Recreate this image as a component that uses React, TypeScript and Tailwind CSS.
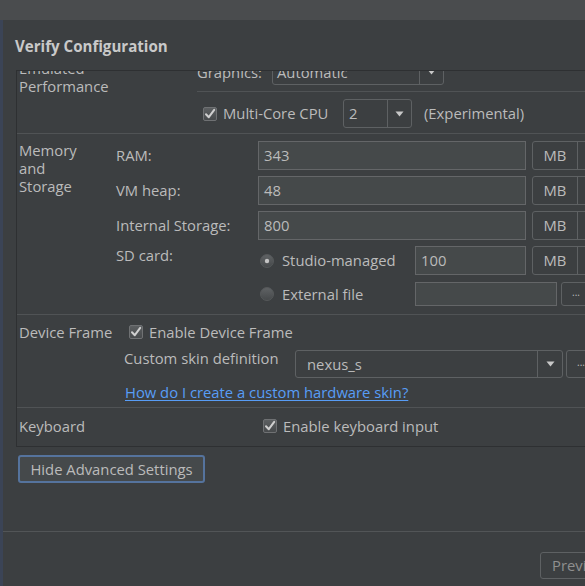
import React from "react";

function Check() {
  return (
    <svg width="14" height="14" viewBox="0 0 14 14" className="shrink-0">
      <defs>
        <linearGradient id="cbg" x1="0" y1="0" x2="0" y2="1">
          <stop offset="0" stopColor="#5d6062" />
          <stop offset="1" stopColor="#46494b" />
        </linearGradient>
      </defs>
      <rect x="0.5" y="0.5" width="13" height="13" rx="1.5" fill="url(#cbg)" stroke="#6f7173" />
      <path d="M3 7.2 L5.8 10.2 L11.2 2.8" fill="none" stroke="#cfcfcf" strokeWidth="2" strokeLinecap="round" strokeLinejoin="round" />
    </svg>
  );
}

function Radio({ on }: { on?: boolean }) {
  return (
    <svg width="14" height="14" viewBox="0 0 14 14" className="shrink-0">
      <defs>
        <linearGradient id="rbg" x1="0" y1="0" x2="0" y2="1">
          <stop offset="0" stopColor="#606365" />
          <stop offset="1" stopColor="#45484a" />
        </linearGradient>
      </defs>
      <circle cx="7" cy="7" r="6.5" fill="url(#rbg)" stroke="#55585a" />
      {on && <circle cx="7" cy="7" r="2.2" fill="#c4c4c4" />}
    </svg>
  );
}

function Arrow() {
  return (
    <svg width="9" height="6" viewBox="0 0 9 6">
      <path d="M0.5 0.5 L8.5 0.5 L4.5 5.5 Z" fill="#c8c8c8" />
    </svg>
  );
}

export default function App() {
  return (
    <div className="w-[585px] h-[586px] overflow-hidden bg-[#3c3f41] flex flex-col text-[#bbbbbb] text-[14.8px] font-['Open_Sans',sans-serif]">
      <div className="h-[20px] shrink-0 bg-[#4a4c4e]" />
      <div className="flex flex-1 min-h-0">
        <div className="w-[3px] shrink-0 bg-[#3b4456]" />
        <div className="flex flex-col flex-1 min-w-0">
          <div className="mt-[16px] ml-[12px] h-[20px] leading-[20px] font-bold text-[15.1px] text-[#c9c9c9]">
            Verify Configuration
          </div>
          <div className="mt-[14px] ml-[13px] w-[600px] shrink-0 border-t border-l border-b border-[#2e3032] overflow-hidden flex flex-col">
            {/* Emulated Performance */}
            <div className="-mt-[12px] flex border-b border-[#505355] pb-[5px]">
              <div className="w-[180px] shrink-0 pl-[2px] leading-[18px]">
                <div>Emulated</div>
                <div>Performance</div>
              </div>
              <div className="flex flex-col flex-1">
                <div className="h-[26px] flex items-center">
                  <div className="w-[75px] shrink-0">Graphics:</div>
                  <div className="w-[172px] h-[26px] border border-[#5e6163] rounded-[3px] flex items-center">
                    <div className="flex-1 pl-[4px]">Automatic</div>
                    <div className="w-[24px] h-full border-l border-[#5e6163] flex items-center justify-center">
                      <Arrow />
                    </div>
                  </div>
                </div>
                <div className="mt-[6px] h-px bg-[#505355]" />
                <div className="mt-[7px] h-[29px] flex items-center">
                  <div className="w-[146px] shrink-0 flex items-center">
                    <div className="ml-[6px]"><Check /></div>
                    <div className="ml-[6px]">Multi-Core CPU</div>
                  </div>
                  <div className="w-[69px] h-[29px] border border-[#5e6163] rounded-[3px] flex items-center">
                    <div className="flex-1 pl-[5px]">2</div>
                    <div className="w-[24px] h-full border-l border-[#5e6163] flex items-center justify-center">
                      <Arrow />
                    </div>
                  </div>
                  <div className="ml-[12px]">(Experimental)</div>
                </div>
              </div>
            </div>

            {/* Memory and Storage */}
            <div className="flex border-b border-[#505355] pt-[7px] pb-[8px]">
              <div className="w-[99px] shrink-0 pl-[2px] leading-[18px]">
                <div>Memory</div>
                <div>and</div>
                <div>Storage</div>
              </div>
              <div className="flex flex-col gap-[6px]">
                {[
                  ["RAM:", "343"],
                  ["VM heap:", "48"],
                  ["Internal Storage:", "800"],
                ].map(([l, v]) => (
                  <div key={l} className="h-[29px] flex items-center">
                    <div className="w-[142px] shrink-0">{l}</div>
                    <div className="w-[268px] h-[29px] bg-[#45494a] border border-[#646668] flex items-center pl-[5px]">{v}</div>
                    <div className="ml-[6px] w-[70px] h-[29px] border border-[#5e6163] rounded-[3px] flex items-center">
                      <div className="w-[44px] text-center">MB</div>
                      <div className="flex-1 h-full border-l border-[#5e6163]" />
                    </div>
                  </div>
                ))}
                <div className="h-[29px] flex items-start">
                  <div className="w-[142px] shrink-0 leading-[18px]">SD card:</div>
                  <div className="w-[157px] shrink-0 h-[29px] flex items-center">
                    <div className="ml-[2px]"><Radio on /></div>
                    <div className="ml-[8px]">Studio-managed</div>
                  </div>
                  <div className="w-[111px] h-[29px] bg-[#45494a] border border-[#646668] flex items-center pl-[5px]">100</div>
                  <div className="ml-[6px] w-[70px] h-[29px] border border-[#5e6163] rounded-[3px] flex items-center">
                    <div className="w-[44px] text-center">MB</div>
                    <div className="flex-1 h-full border-l border-[#5e6163]" />
                  </div>
                </div>
                <div className="mt-px h-[24px] flex items-center">
                  <div className="w-[142px] shrink-0" />
                  <div className="w-[157px] shrink-0 flex items-center">
                    <div className="ml-[2px]"><Radio /></div>
                    <div className="ml-[8px]">External file</div>
                  </div>
                  <div className="w-[142px] h-[24px] bg-[#45494a] border border-[#646668]" />
                  <div className="ml-[4px] w-[30px] h-[24px] border border-[#5e6163] rounded-[3px] flex items-center justify-center text-[10px] leading-none pb-[4px]">...</div>
                </div>
              </div>
            </div>

            {/* Device Frame */}
            <div className="flex border-b border-[#505355] pt-[8px] pb-[6px]">
              <div className="w-[107px] shrink-0 pl-[2px] leading-[18px]">Device Frame</div>
              <div className="flex flex-col">
                <div className="h-[18px] flex items-center">
                  <div className="ml-[5px]"><Check /></div>
                  <div className="ml-[6px]">Enable Device Frame</div>
                </div>
                <div className="mt-[9px] h-[28px] flex items-center">
                  <div className="w-[171px] shrink-0 -mt-[12px]">Custom skin definition</div>
                  <div className="w-[268px] h-[28px] border border-[#5e6163] rounded-[3px] flex items-center">
                    <div className="flex-1 pl-[11px]">nexus_s</div>
                    <div className="w-[25px] h-full border-l border-[#5e6163] flex items-center justify-center">
                      <Arrow />
                    </div>
                  </div>
                  <div className="ml-[3px] w-[30px] h-[28px] border border-[#5e6163] rounded-[3px] flex items-center justify-center text-[10px] leading-none pb-[4px]">...</div>
                </div>
                <div className="mt-[5px] leading-[18px] pl-px text-[#589df6] underline underline-offset-2">
                  How do I create a custom hardware skin?
                </div>
              </div>
            </div>

            {/* Keyboard */}
            <div className="flex pt-[9px] pb-[11px]">
              <div className="w-[246px] shrink-0 pl-[2px] leading-[18px]">Keyboard</div>
              <div className="h-[18px] flex items-center">
                <Check />
                <div className="ml-[6px]">Enable keyboard input</div>
              </div>
            </div>
          </div>

          <div className="mt-[8px] ml-[15px] w-[187px] h-[28px] shrink-0 rounded-[3px] border-2 border-[#55739d] bg-[#45494b] flex items-center justify-center">
            Hide Advanced Settings
          </div>

          <div className="mt-[48px] h-px shrink-0 bg-[#525557]" />

          <div className="mt-[20px] ml-[537px] w-[80px] h-[27px] shrink-0 border border-[#5e6163] rounded-[3px] flex items-center pl-[11px] text-[#8f8f8f]">
            Previous
          </div>
        </div>
      </div>
    </div>
  );
}
